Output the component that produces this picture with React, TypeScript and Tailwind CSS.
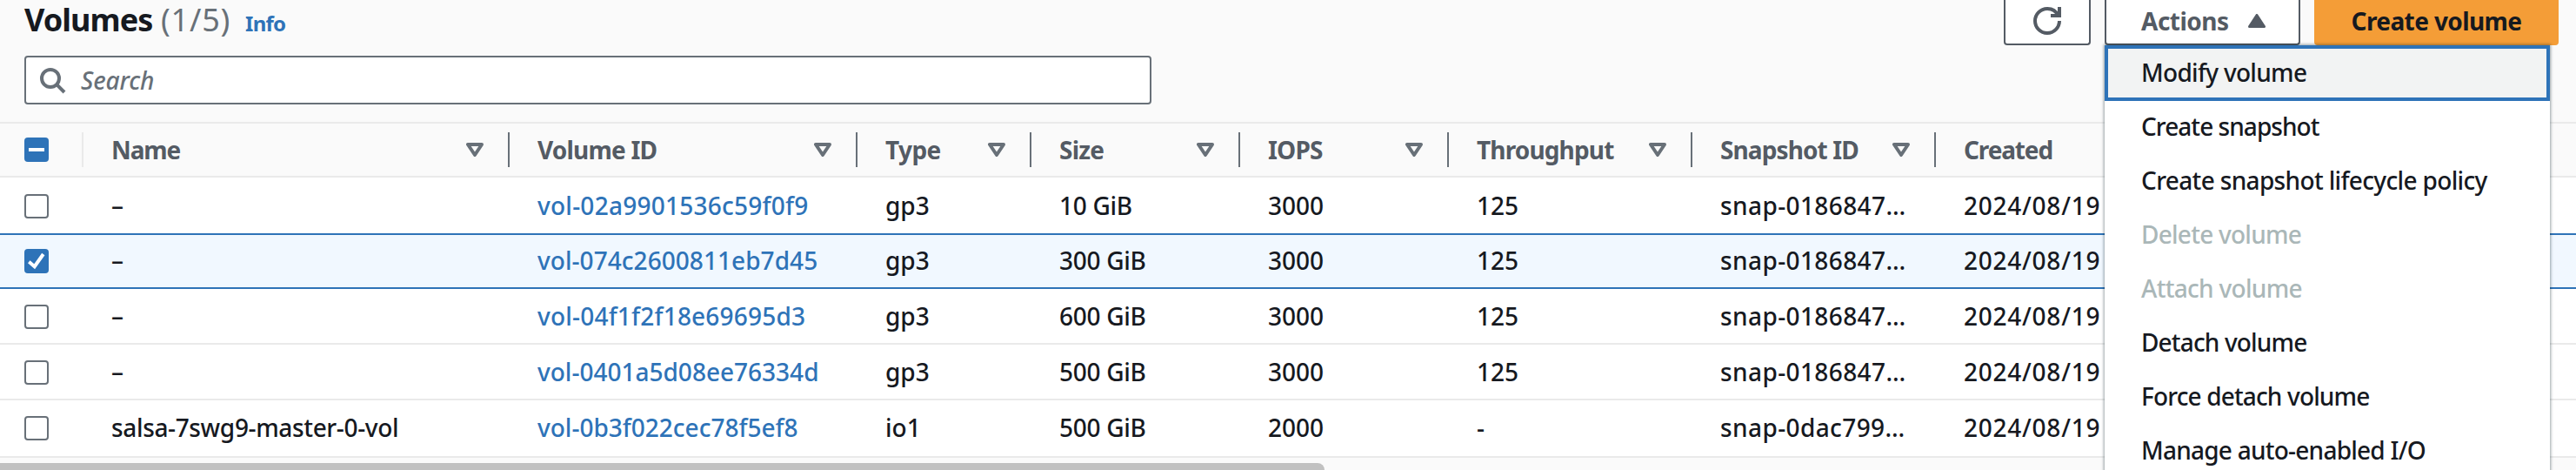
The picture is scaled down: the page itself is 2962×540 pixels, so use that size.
import type { ReactNode } from "react";

type Row = {
  name: string;
  id: string;
  idClass: string;
  type: string;
  size: string;
  iops: string;
  throughput: string;
  snapshot: string;
  rowClass: string;
  selected?: boolean;
};

const rows: Row[] = [
  { name: "–", id: "vol-02a9901536c59f0f9", idClass: "tracking-[0.24px]", type: "gp3", size: "10 GiB", iops: "3000", throughput: "125", snapshot: "snap-0186847…", rowClass: "h-[64px] pt-[3px]" },
  { name: "–", id: "vol-074c2600811eb7d45", idClass: "tracking-[0.05px]", type: "gp3", size: "300 GiB", iops: "3000", throughput: "125", snapshot: "snap-0186847…", rowClass: "h-[64px] border-y-2 border-[#2e73b8] bg-[#f1f8ff]", selected: true },
  { name: "–", id: "vol-04f1f2f18e69695d3", idClass: "tracking-[0.2px]", type: "gp3", size: "600 GiB", iops: "3000", throughput: "125", snapshot: "snap-0186847…", rowClass: "h-[64px] border-b-2 border-[#eaeaea] pt-[2px]" },
  { name: "–", id: "vol-0401a5d08ee76334d", idClass: "tracking-[0px]", type: "gp3", size: "500 GiB", iops: "3000", throughput: "125", snapshot: "snap-0186847…", rowClass: "h-[64px] border-b-2 border-[#eaeaea] pt-[2px]" },
  { name: "salsa-7swg9-master-0-vol", id: "vol-0b3f022cec78f5ef8", idClass: "tracking-[0px]", type: "io1", size: "500 GiB", iops: "2000", throughput: "-", snapshot: "snap-0dac799…", rowClass: "h-[66px] border-b-2 border-[#eaeaea] pt-[2px]" },
];

const headers = [
  { label: "Name", labelClass: "tracking-[-1.1px]", width: "w-[490px]", sortable: true },
  { label: "Volume ID", labelClass: "tracking-[-0.8px]", width: "w-[400px]", sortable: true },
  { label: "Type", labelClass: "tracking-[-0.6px]", width: "w-[200px]", sortable: true },
  { label: "Size", labelClass: "tracking-[-0.8px]", width: "w-[240px]", sortable: true },
  { label: "IOPS", labelClass: "tracking-[-0.8px]", width: "w-[240px]", sortable: true },
  { label: "Throughput", labelClass: "tracking-[-0.85px]", width: "w-[280px]", sortable: true },
  { label: "Snapshot ID", labelClass: "tracking-[-0.9px]", width: "w-[280px]", sortable: true },
  { label: "Created", labelClass: "tracking-[-1.15px]", width: "w-[736px]", sortable: false },
];

const menu = [
  { label: "Create snapshot", cls: "tracking-[-0.95px]" },
  { label: "Create snapshot lifecycle policy", cls: "tracking-[-0.65px]" },
  { label: "Delete volume", cls: "tracking-[-0.75px] text-[#aab7b8]" },
  { label: "Attach volume", cls: "tracking-[-0.7px] text-[#aab7b8]" },
  { label: "Detach volume", cls: "tracking-[-0.85px]" },
  { label: "Force detach volume", cls: "tracking-[-0.85px]" },
  { label: "Manage auto-enabled I/O", cls: "tracking-[-0.76px]" },
];

function Checkbox({ state }: { state: "off" | "on" | "mixed" }) {
  if (state === "off") return <div className="size-7 rounded-[4px] border-2 border-[#687078] bg-white" />;
  return (
    <div className="size-7 rounded-[4px] bg-[#2e73b8]">
      <svg viewBox="0 0 28 28" className="size-7" fill="none" stroke="#fff" strokeWidth="4">
        {state === "on" ? <path d="M5.3 14.8l6.4 5.4L21.8 6" /> : <path d="M5 14h18" />}
      </svg>
    </div>
  );
}

function Cell({ width, cls = "", children }: { width: string; cls?: string; children: ReactNode }) {
  return <div className={`${width} ${cls} shrink-0 overflow-hidden pl-[32px] leading-[58px] whitespace-nowrap`}>{children}</div>;
}

export default function App() {
  return (
    <div className="relative h-[540px] w-[2962px] overflow-hidden bg-[#fafafa] font-['Noto_Sans',sans-serif] text-[28px] font-[460] text-[#16191f]">
      <div className="flex h-[64px] items-start justify-between pr-[20px] pl-[28px]">
        <div className="flex items-baseline leading-[45px]">
          <h1 className="w-[157px] text-[36px] font-bold tracking-[-0.95px]">Volumes</h1>
          <span className="w-[97px] text-[36px] font-normal tracking-[0.8px] text-[#687078]">(1/5)</span>
          <a className="text-[24px] font-bold tracking-[-0.7px] text-[#2e73b8]">Info</a>
        </div>
        <div className="flex h-[52px] gap-4">
          <button className="flex w-[100px] justify-center rounded-b-[4px] border-2 border-t-0 border-[#545b64] bg-white pt-[8px]">
            <svg viewBox="0 0 16 16" className="size-8" fill="none" stroke="#545b64" strokeWidth="2">
              <path d="M10 5h5V0" />
              <path d="M15 8a7 7 0 0 1-14 0 7 7 0 0 1 7-7 6.87 6.87 0 0 1 6.3 4" />
            </svg>
          </button>
          <button className="flex w-[225px] rounded-b-[4px] border-2 border-t-0 border-[#545b64] bg-white pl-[40px] text-left leading-[48px] font-bold text-[#545b64]">
            <span className="w-[123px] tracking-[-0.5px]">Actions</span>
            <svg viewBox="0 0 20 16" className="mt-4 h-4 w-5">
              <path d="M10 1.5L18.5 14.5h-17z" fill="#545b64" stroke="#545b64" strokeWidth="3" strokeLinejoin="round" />
            </svg>
          </button>
          <button className="w-[281px] rounded-b-[4px] bg-[#f49d37] leading-[48px] font-bold tracking-[-0.6px]">
            <span className="block h-[52px]">Create volume</span>
          </button>
        </div>
      </div>
      <div className="ml-[28px] flex h-[56px] w-[1296px] items-center rounded-[4px] border-2 border-[#687078] bg-white pl-[14px] text-[#687078]">
        <svg viewBox="0 0 16 16" className="size-8" fill="none" stroke="currentColor" strokeWidth="2">
          <circle cx="7" cy="7" r="5" />
          <path d="M10.6 10.6l4.4 4.4" />
        </svg>
        <span className="pl-[17px] leading-[52px] tracking-[-0.1px] italic">Search</span>
      </div>
      <div className="mt-[20px] flex h-[64px] items-center border-y-2 border-[#eaeaea] text-[#545b64]">
        <div className="flex h-[40px] w-[96px] items-center border-r-2 border-[#eaeaea] pl-[28px]">
          <Checkbox state="mixed" />
        </div>
        {headers.map((h) => (
          <div key={h.label} className={`${h.width} flex h-[40px] shrink-0 items-center pl-[32px] leading-[38px] font-bold ${h.sortable ? "border-r-2 border-[#687078]" : ""}`}>
            <span className={`${h.labelClass} flex-1`}>{h.label}</span>
            {h.sortable && (
              <svg viewBox="0 0 20 16" className="mr-[28px] h-4 w-5">
                <path d="M2 2h16L10 14z" fill="none" stroke="#687078" strokeWidth="4" strokeLinejoin="round" />
              </svg>
            )}
          </div>
        ))}
      </div>
      <div className="bg-white">
        {rows.map((r) => (
          <div key={r.id} className={`${r.rowClass} flex items-start`}>
            <div className="flex h-[60px] w-[96px] shrink-0 items-center pl-[28px]">
              <Checkbox state={r.selected ? "on" : "off"} />
            </div>
            <Cell width="w-[490px]" cls="tracking-[-0.35px]">{r.name}</Cell>
            <Cell width="w-[400px]" cls={`${r.idClass} text-[#2e73b8]`}>{r.id}</Cell>
            <Cell width="w-[200px]">{r.type}</Cell>
            <Cell width="w-[240px]" cls="tracking-[-0.3px]">{r.size}</Cell>
            <Cell width="w-[240px]">{r.iops}</Cell>
            <Cell width="w-[280px]">{r.throughput}</Cell>
            <Cell width="w-[280px]" cls="tracking-[0.4px]">{r.snapshot}</Cell>
            <Cell width="w-[300px]" cls="tracking-[0.75px]">2024/08/19</Cell>
          </div>
        ))}
      </div>
      <div className="mt-[6px] h-[16px] w-[1523px] rounded-r-[8px] bg-[#c1c1c1]" />

      <div className="absolute top-[52px] left-[2420px] h-[520px] w-[512px] bg-white shadow-[0_0_3px_1px_rgba(0,28,36,0.4)]">
        <div className="h-[64px] border-4 border-[#2e73b8] bg-[#f2f3f3] pl-[38px] leading-[55px] tracking-[-0.7px]">Modify volume</div>
        {menu.map((m) => (
          <div key={m.label} className={`${m.cls} h-[62px] pl-[42px] leading-[59px]`}>{m.label}</div>
        ))}
      </div>
    </div>
  );
}
